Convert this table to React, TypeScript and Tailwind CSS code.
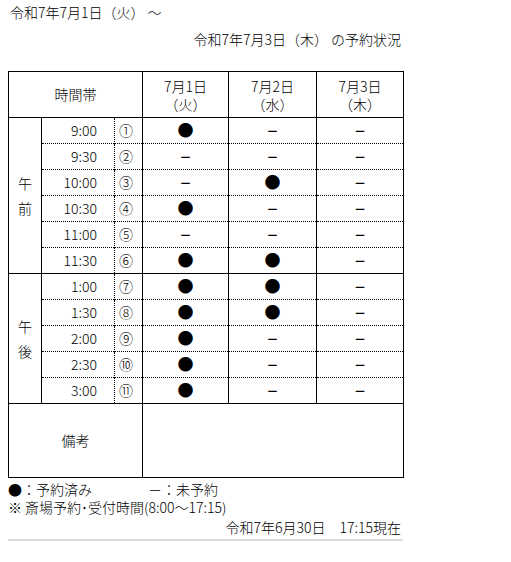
import React from 'react';

type Mark = 'o' | '-';

const morning: { time: string; no: string; marks: Mark[] }[] = [
  { time: '9:00', no: '①', marks: ['o', '-', '-'] },
  { time: '9:30', no: '②', marks: ['-', '-', '-'] },
  { time: '10:00', no: '③', marks: ['-', 'o', '-'] },
  { time: '10:30', no: '④', marks: ['o', '-', '-'] },
  { time: '11:00', no: '⑤', marks: ['-', '-', '-'] },
  { time: '11:30', no: '⑥', marks: ['o', 'o', '-'] },
];

const afternoon: { time: string; no: string; marks: Mark[] }[] = [
  { time: '1:00', no: '⑦', marks: ['o', 'o', '-'] },
  { time: '1:30', no: '⑧', marks: ['o', 'o', '-'] },
  { time: '2:00', no: '⑨', marks: ['o', '-', '-'] },
  { time: '2:30', no: '⑩', marks: ['o', '-', '-'] },
  { time: '3:00', no: '⑪', marks: ['o', '-', '-'] },
];

const MarkCell = ({ m }: { m: Mark }) => (
  <td className="border-l border-r border-black text-center p-0">
    {m === 'o' ? (
      <span className="text-[16px] leading-none">●</span>
    ) : (
      <span className="text-[12px] leading-none font-bold">－</span>
    )}
  </td>
);

const Rows = ({
  rows,
  label,
}: {
  rows: { time: string; no: string; marks: Mark[] }[];
  label: [string, string];
}) => (
  <>
    {rows.map((r, i) => (
      <tr
        key={r.time}
        className={
          i === rows.length - 1
            ? 'h-[26px] border-b border-solid border-black'
            : 'h-[26px] border-b border-dotted border-black'
        }
      >
        {i === 0 && (
          <td rowSpan={rows.length} className="border border-black text-center align-middle p-0 leading-[25px]">
            {label[0]}
            <br />
            {label[1]}
          </td>
        )}
        <td className="border-l border-r border-black [border-right-style:dotted] text-right pr-[17px] p-0">
          {r.time}
        </td>
        <td className="border-r border-black text-left pl-[4px] p-0 text-[14px]">{r.no}</td>
        {r.marks.map((m, j) => (
          <MarkCell key={j} m={m} />
        ))}
      </tr>
    ))}
  </>
);

export default function App() {
  return (
    <div
      className="w-[511px] h-[562px] bg-white text-black text-[14px] font-light overflow-hidden"
      style={{ fontFamily: '"Noto Sans CJK JP", "Noto Sans", sans-serif' }}
    >
      <div className="pl-[10px] pt-[2px] leading-[20px]">令和7年7月1日（火） ～</div>
      <div className="w-[401px] text-right pt-[7px] leading-[20px]">令和7年7月3日（木） の予約状況</div>

      <table className="ml-[8px] mt-[22px] w-[395px] table-fixed border-collapse border border-black">
        <colgroup>
          <col className="w-[33px]" />
          <col className="w-[73px]" />
          <col className="w-[28px]" />
          <col className="w-[86px]" />
          <col className="w-[88px]" />
          <col className="w-[87px]" />
        </colgroup>
        <tbody>
          <tr className="h-[46px] border-b border-black">
            <td colSpan={3} className="border border-black text-center p-0">時間帯</td>
            <td className="border border-black text-center p-0 leading-[18px]">7月1日<br />（火）</td>
            <td className="border border-black text-center p-0 leading-[18px]">7月2日<br />（水）</td>
            <td className="border border-black text-center p-0 leading-[18px]">7月3日<br />（木）</td>
          </tr>
          <Rows rows={morning} label={['午', '前']} />
          <Rows rows={afternoon} label={['午', '後']} />
          <tr className="h-[74px]">
            <td colSpan={3} className="border border-black text-center p-0">備考</td>
            <td colSpan={3} className="border border-black p-0"></td>
          </tr>
        </tbody>
      </table>

      <div className="pl-[8px] mt-[2px] leading-[18px] flex">
        <span className="w-[140px]">●：予約済み</span>
        <span>－：未予約</span>
      </div>
      <div className="pl-[8px] leading-[18px]">※ 斎場予約･受付時間(8:00～17:15)</div>
      <div className="w-[401px] text-right mt-[1px] leading-[20px]">令和7年6月30日　17:15現在</div>
      <div className="ml-[8px] mt-[2px] w-[395px] h-[2px] bg-[#dcdcdc]"></div>
    </div>
  );
}
